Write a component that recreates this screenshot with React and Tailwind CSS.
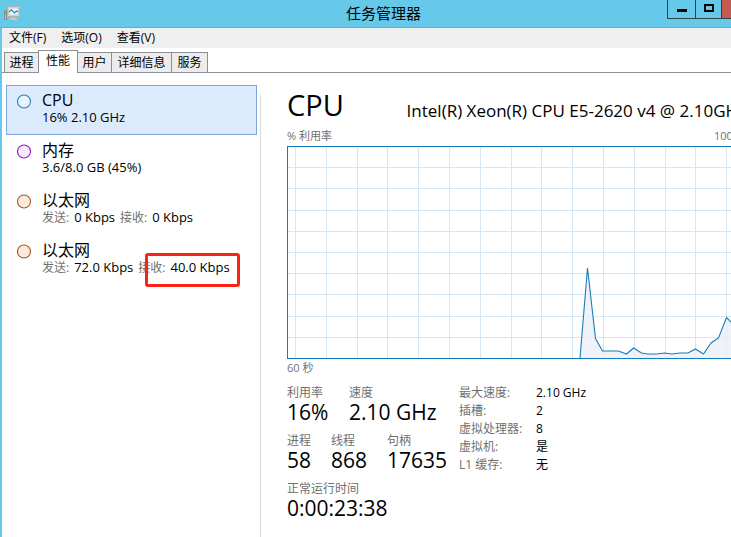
import clsx from 'clsx';

const menus = ['文件(F)', '选项(O)', '查看(V)'];

const tabs = [
  { name: '进程', width: 'w-[35px]' },
  { name: '性能', width: 'w-10' },
  { name: '用户', width: 'w-[35px]' },
  { name: '详细信息', width: 'w-[61px]' },
  { name: '服务', width: 'w-[37px]' },
];

const resources = [
  { name: 'CPU', color: '#2386bd', fill: '#e8f3fa', parts: [['', '16% 2.10 GHz']] },
  { name: '内存', color: '#8f20ac', fill: '#f7e9fb', parts: [['', '3.6/8.0 GB (45%)']] },
  { name: '以太网', color: '#a75c24', fill: '#fcebdc', parts: [['发送:', '0 Kbps'], ['接收:', '0 Kbps']] },
  {
    name: '以太网',
    color: '#a75c24',
    fill: '#fcebdc',
    parts: [['发送:', '72.0 Kbps'], ['接收:', '40.0 Kbps']],
    marked: true,
  },
];

const specs = [
  ['最大速度:', '2.10 GHz'],
  ['插槽:', '2'],
  ['虚拟处理器:', '8'],
  ['虚拟机:', '是'],
  ['L1 缓存:', '无'],
];

const usage =
  '293,212 300.5,122 308.5,192.5 315.5,205 331.5,205 339.5,208 346.5,202 354.5,207 361,208 370,208 377.5,207 385,208 393,207 401,207 408.5,203 416.5,208 424,197 431.5,192 439.5,171.5 447,179 454,190 480,196';

const columns = Array.from({ length: 15 }, (_, i) => Math.round(8 + i * 30.8));
const rows = Array.from({ length: 9 }, (_, i) => Math.round((i + 1) * 21.2));

function AppIcon() {
  return (
    <svg width="16" height="15" viewBox="0 0 16 15">
      <rect x="0.5" y="4.5" width="2" height="9" fill="#b9bcc0" stroke="#8b8f94" />
      <rect x="1" y="6" width="2" height="2" fill="#3fc11c" />
      <rect x="3.5" y="0.5" width="12" height="10" fill="#d9dbdd" stroke="#b5b1ad" />
      <rect x="5" y="2" width="9" height="7" fill="#f4f9fc" stroke="#9fb4c4" strokeWidth="0.5" />
      <path d="M5 6 L7.5 3.8 L10.5 7 L12.5 5 L14 6" fill="none" stroke="#2b86c0" strokeWidth="1.1" />
      <path d="M7.5 11 H11.5 V12.5 H13.5 V14 H5.5 V12.5 H7.5 Z" fill="#c3c5c7" />
    </svg>
  );
}

function TitleBar() {
  return (
    <header className="flex h-7 items-start border-b border-[#7aa5bd] bg-[#66c9ea]">
      <div className="w-40 pt-[6px] pl-1">
        <AppIcon />
      </div>
      <h1 className="flex-1 pr-[60px] text-center text-[15px] leading-[26px]">任务管理器</h1>
      <div className="mr-[6px] flex h-[19px] border-b border-l border-[#2f4047]">
        <button aria-label="最小化" className="flex w-7 justify-center border-r border-[#2f4047] pt-[9px]">
          <span className="h-[3px] w-[10px] bg-black" />
        </button>
        <button aria-label="最大化" className="flex w-[26px] justify-center border-r border-[#2f4047] pt-1">
          <span className="h-2 w-[10px] border-2 border-black" />
        </button>
        <button aria-label="关闭" className="w-[38px] bg-[#c75a50]" />
      </div>
    </header>
  );
}

function Tabs() {
  return (
    <div role="tablist" className="flex h-[25px] items-end border-b border-[#8c8e98] pl-[2px]">
      {tabs.map((tab) => {
        const active = tab.name === '性能';
        return (
          <button
            key={tab.name}
            role="tab"
            aria-selected={active}
            className={clsx(
              '-mr-px border border-b-0 border-[#8c8e98] text-center whitespace-nowrap',
              tab.width,
              active ? 'relative -mb-px h-[23px] bg-white pb-[2px]' : 'h-5 bg-[#ececec]'
            )}
          >
            {tab.name}
          </button>
        );
      })}
    </div>
  );
}

function Resource({ item, active }) {
  return (
    <button
      className={clsx(
        'relative flex h-[50px] w-full gap-[10px] border pl-[10px] text-left',
        active ? 'border-[#7da7dc] bg-[#dceafd]' : 'border-transparent'
      )}
    >
      <svg width="15" height="15" viewBox="0 0 15 15" className="mt-2 shrink-0">
        <circle cx="7" cy="7.5" r="6.5" fill={item.fill} stroke={item.color} strokeWidth="1.1" />
      </svg>
      <span className="flex flex-col pt-1">
        <span className="text-base leading-5">{item.name}</span>
        <span className="flex gap-[5px] leading-[15px] whitespace-nowrap">
          {item.parts.map(([label, value]) => (
            <span key={label} className="flex gap-[5px]">
              {label && <span className="text-[#707070]">{label}</span>}
              <span className="text-[13px]">{value}</span>
            </span>
          ))}
        </span>
      </span>
      {item.marked && (
        <span className="absolute top-[17px] left-[138px] h-[34px] w-[95px] rounded-[3px] border-3 border-[#fb2314]" />
      )}
    </button>
  );
}

function Chart() {
  return (
    <svg className="block h-[213px] w-full" role="img" aria-label="% 利用率">
      {columns.map((x) => (
        <rect key={x} x={x} width="1" height="100%" fill="#d6e7f3" />
      ))}
      {rows.map((y) => (
        <rect key={y} y={y} width="100%" height="1" fill="#d6e7f3" />
      ))}
      <polygon points={`${usage} 480,212 293,212`} fill="#e9eff7" fillOpacity="0.75" />
      <polyline points={usage} fill="none" stroke="#1a7db8" strokeWidth="1.1" />
      <rect width="1" height="100%" fill="#117dbb" />
      <rect width="100%" height="1" fill="#117dbb" />
      <rect width="100%" y="212" height="1" fill="#117dbb" />
    </svg>
  );
}

function Stat({ label, value, className }) {
  return (
    <div className={className}>
      <dt className="leading-4 text-[#707070]">{label}</dt>
      <dd className="text-[21px] leading-[22px] whitespace-nowrap">{value}</dd>
    </div>
  );
}

function CpuPanel() {
  return (
    <section className="flex-1 pt-[14px] pr-5 pl-[26px]">
      <div className="flex h-9 items-center justify-between">
        <h2 className="text-[29px] leading-9">CPU</h2>
        <p className="pt-3 text-[17px] leading-6 whitespace-nowrap">Intel(R) Xeon(R) CPU E5-2620 v4 @ 2.10GHz</p>
      </div>
      <div className="flex h-[23px] justify-between pt-[5px] pr-1 text-[11px] leading-4 text-[#707070]">
        <span>% 利用率</span>
        <span>100%</span>
      </div>
      <Chart />
      <div className="pt-px text-[11px] leading-4 text-[#707070]">60 秒</div>
      <div className="flex pt-[9px]">
        <dl className="flex w-[172px] flex-col gap-[10px]">
          <div className="flex">
            <Stat label="利用率" value="16%" className="w-[62px]" />
            <Stat label="速度" value="2.10 GHz" />
          </div>
          <div className="flex">
            <Stat label="进程" value="58" className="w-11" />
            <Stat label="线程" value="868" className="w-14" />
            <Stat label="句柄" value="17635" />
          </div>
          <Stat label="正常运行时间" value="0:00:23:38" />
        </dl>
        <table className="-mt-px self-start text-left">
          <tbody>
            {specs.map(([label, value]) => (
              <tr key={label} className="h-[18px]">
                <th className="w-[77px] p-0 leading-[18px] font-normal text-[#707070]">{label}</th>
                <td className="p-0 leading-[18px]">{value}</td>
              </tr>
            ))}
          </tbody>
        </table>
      </div>
    </section>
  );
}

export default function App() {
  return (
    <div className="h-screen overflow-hidden bg-white font-['Open_Sans','Noto_Sans_CJK_SC',sans-serif] text-xs text-black">
      <div className="flex min-h-full min-w-[766px] flex-col">
        <TitleBar />
        <div className="flex flex-1 flex-col border-l-2 border-[#66c9ea]">
          <nav className="flex h-5 gap-[15px] bg-[#efefef] pl-[7px]">
            {menus.map((menu) => (
              <button key={menu} className="leading-5">
                {menu}
              </button>
            ))}
          </nav>
          <Tabs />
          <main className="flex flex-1">
            <aside className="w-[255px] pt-3 pl-1">
              {resources.map((item, i) => (
                <Resource key={i} item={item} active={i === 0} />
              ))}
            </aside>
            <div className="mt-[22px] ml-[3px] w-px bg-[#d8d8d8]" />
            <CpuPanel />
          </main>
        </div>
      </div>
    </div>
  );
}
